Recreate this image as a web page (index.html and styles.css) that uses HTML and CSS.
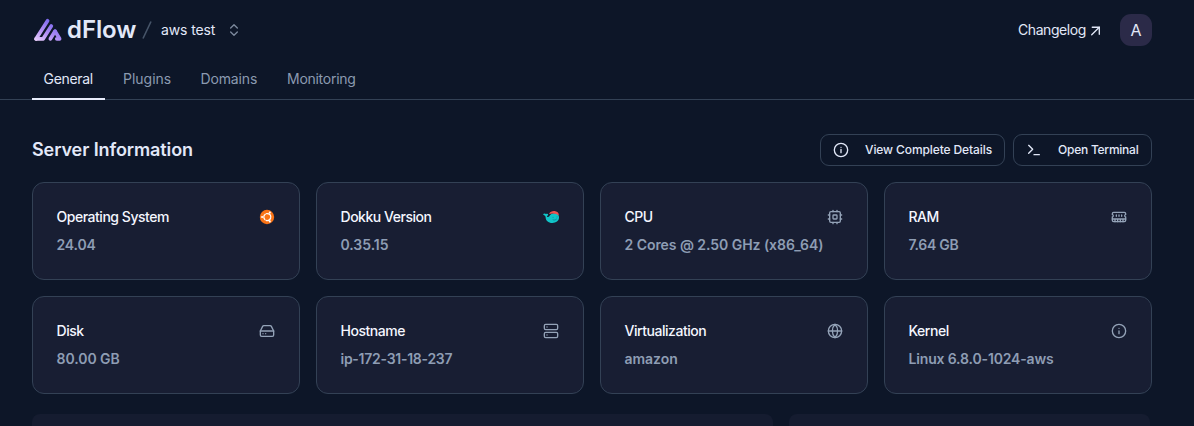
FILE: index.html
```html
<!DOCTYPE html>
<html lang="en">
<head>
<meta charset="utf-8">
<title>dFlow</title>
<link rel="stylesheet" href="styles.css">
</head>
<body>
<header class="topbar">
  <div class="brand">
    <svg class="logo" viewBox="0 0 30 24">
      <defs><linearGradient id="lg" gradientUnits="userSpaceOnUse" x1="20" y1="1" x2="6" y2="24"><stop offset="0" stop-color="#7161ee"/><stop offset=".55" stop-color="#b08df5"/><stop offset="1" stop-color="#e6cbfb"/></linearGradient></defs>
      <g fill="none" stroke="url(#lg)" stroke-width="3.7" stroke-linecap="round" stroke-linejoin="round"><path d="M14.6 2.8 3 21"/><path d="M18.3 8 10.2 20.8H3.2"/><path d="M22 13.2 17.4 20.8"/><path d="M22.2 13.4 26.6 20.8H23.8"/></g>
    </svg>
    <span class="brand-name">dFlow</span>
    <svg class="slash" viewBox="0 0 10 18"><path d="M9 .5 1 17.5"/></svg>
    <span class="server-name">aws test</span>
    <svg class="icon chevrons" viewBox="0 0 24 24"><path d="m7 15 5 5 5-5"/><path d="m7 9 5-5 5 5"/></svg>
  </div>
  <div class="account">
    <a class="changelog">Changelog</a>
    <svg class="icon arrow" viewBox="0 0 24 24"><path d="M6 6h13v13"/><path d="M5 20 19 6"/></svg>
    <span class="avatar">A</span>
  </div>
</header>
<nav class="tabs">
  <a class="tab tab-active">General</a>
  <a class="tab tab-plugins">Plugins</a>
  <a class="tab tab-domains">Domains</a>
  <a class="tab tab-last">Monitoring</a>
</nav>
<main class="content">
  <div class="heading">
    <h1 class="title">Server Information</h1>
    <div class="actions">
      <button class="btn btn-details"><svg class="icon" viewBox="0 0 24 24"><circle cx="12" cy="12" r="10"/><path d="M12 16v-5M12 8h.01"/></svg><span>View Complete Details</span></button>
      <button class="btn btn-terminal"><svg class="icon" viewBox="0 0 24 24"><path d="m4 17 6-6-6-6"/><path d="M12 19h8"/></svg><span>Open Terminal</span></button>
    </div>
  </div>
  <section class="cards">
    <article class="card"><div class="row"><h2 class="label">Operating System</h2>
      <svg class="icon" viewBox="0 0 16 16"><circle cx="8" cy="8" r="7.2" fill="#f97316" stroke="none"/><circle cx="8.3" cy="8" r="3.5" stroke="#fff" stroke-width="1.25" stroke-dasharray="5.9 1.43" stroke-dashoffset="-.7"/><g fill="#fff" stroke="none"><circle cx="3.1" cy="8" r="1.05"/><circle cx="10.8" cy="3.6" r="1.05"/><circle cx="10.8" cy="12.4" r="1.05"/></g></svg></div>
      <p class="value">24.04</p></article>
    <article class="card"><div class="row"><h2 class="label">Dokku Version</h2>
      <svg class="icon" viewBox="0 0 16 16"><path fill="#11c5c8" stroke="none" d="M0 5.3C.9 4.2 2.3 4.4 3 5.1 3.8 4.4 5 4.6 5.2 5.2 5.2 6.2 4.2 6.7 3.9 7.4 4.7 8.4 5.7 8.1 6.3 7.2 8 3.3 15.5 3 16 7.7c.3 4-2.5 6.2-6.6 6.2C5.2 13.9 2.6 11.5 2.6 7.9 2.3 6.7 1 6.6 0 5.3z"/><path fill="#ef5350" stroke="none" d="M6.1 4.9C7.2 2.3 10 1.7 12.4 2.2c2.2.4 3.5 1.8 3.4 4.2C13.5 4.4 9.4 3.9 6.1 4.9z"/><path stroke="#087f91" stroke-width=".7" d="M10 10.8c1.3.7 2.7.2 3.6-.8M10 8.4h.1M14 7.9h.1"/></svg></div>
      <p class="value value-plain">0.35.15</p></article>
    <article class="card"><div class="row"><h2 class="label">CPU</h2>
      <svg class="icon" viewBox="0 0 24 24"><rect x="4" y="4" width="16" height="16" rx="2"/><rect x="9" y="9" width="6" height="6" rx="1"/><path d="M15 2v2M15 20v2M2 15h2M2 9h2M20 15h2M20 9h2M9 2v2M9 20v2"/></svg></div>
      <p class="value value-plain">2 Cores @ 2.50 GHz (x86_64)</p></article>
    <article class="card"><div class="row"><h2 class="label">RAM</h2>
      <svg class="icon" viewBox="0 0 24 24"><path d="M6 19v-3M10 19v-3M14 19v-3M18 19v-3M8 11V9M16 11V9M12 11V9M2 15h20"/><path d="M2 7a2 2 0 0 1 2-2h16a2 2 0 0 1 2 2v1.1a2 2 0 0 0 0 3.837V17a2 2 0 0 1-2 2H4a2 2 0 0 1-2-2v-5.1a2 2 0 0 0 0-3.837Z"/></svg></div>
      <p class="value value-tight">7.64 GB</p></article>
    <article class="card"><div class="row"><h2 class="label">Disk</h2>
      <svg class="icon" viewBox="0 0 24 24"><path d="M22 12H2"/><path d="M5.45 5.11 2 12v6a2 2 0 0 0 2 2h16a2 2 0 0 0 2-2v-6l-3.45-6.89A2 2 0 0 0 16.76 4H7.24a2 2 0 0 0-1.79 1.11zM6 16h.01M10 16h.01"/></svg></div>
      <p class="value value-plain">80.00 GB</p></article>
    <article class="card"><div class="row"><h2 class="label">Hostname</h2>
      <svg class="icon" viewBox="0 0 24 24"><rect x="2" y="2" width="20" height="8" rx="2"/><rect x="2" y="14" width="20" height="8" rx="2"/><path d="M6 6h.01M6 18h.01"/></svg></div>
      <p class="value value-tight">ip-172-31-18-237</p></article>
    <article class="card"><div class="row"><h2 class="label">Virtualization</h2>
      <svg class="icon" viewBox="0 0 24 24"><circle cx="12" cy="12" r="10"/><path d="M12 2a14.5 14.5 0 0 0 0 20 14.5 14.5 0 0 0 0-20M2 12h20"/></svg></div>
      <p class="value value-plain">amazon</p></article>
    <article class="card"><div class="row"><h2 class="label">Kernel</h2>
      <svg class="icon" viewBox="0 0 24 24"><circle cx="12" cy="12" r="10"/><path d="M12 16v-4M12 8h.01"/></svg></div>
      <p class="value">Linux 6.8.0-1024-aws</p></article>
  </section>
  <section class="panels"><div class="panel"></div><div class="panel"></div></section>
</main>
</body>
</html>
```
FILE: styles.css
```css
* { box-sizing: border-box; }
body { margin: 0; height: 426px; overflow: hidden; background: #0d1628; color: #e2e8f8; font-family: Inter, "Liberation Sans", sans-serif; font-size: 14px; }
h1, h2, p { margin: 0; }
.icon { width: 16px; height: 16px; flex: none; fill: none; stroke: currentColor; stroke-width: 2; stroke-linecap: round; stroke-linejoin: round; }
.topbar { height: 60px; padding: 0 42px 0 33px; display: flex; align-items: center; justify-content: space-between; white-space: nowrap; }
.brand, .account { display: flex; align-items: center; }
.logo { width: 30px; height: 24px; }
.brand-name { width: 71px; margin-left: 4px; font-size: 24px; font-weight: 600; line-height: 28px; letter-spacing: -.1px; }
.slash { width: 10px; height: 18px; margin: 0 9px 0 4px; fill: none; stroke: #475569; stroke-width: 1.6; }
.server-name { width: 55px; line-height: 20px; letter-spacing: -.12px; }
.chevrons { margin-left: 10px; color: #7c899d; }
.changelog { width: 70px; line-height: 20px; letter-spacing: -.42px; }
.arrow { width: 13px; height: 13px; margin-left: 1px; stroke-width: 2.4; }
.avatar { width: 32px; height: 32px; margin-left: 18px; border-radius: 11px; background: #2b2a48; display: grid; place-items: center; font-size: 16px; }
.tabs { height: 40px; padding-left: 32px; display: flex; border-bottom: 1px solid #334155; white-space: nowrap; }
.tab { height: 40px; padding: 9px 0 0 12px; line-height: 20px; color: #8b9ab0; }
.tab-active { width: 73px; margin-right: 6px; padding-left: 11.5px; letter-spacing: -.3px; color: #e2e8f8; border-bottom: 2px solid #e8ecfb; }
.tab-plugins { width: 77.5px; }
.tab-domains { width: 86.5px; letter-spacing: -.15px; }
.tab-last { width: 100px; letter-spacing: -.27px; }
.content { padding: 34px 42px 0 32px; }
.heading { height: 32px; display: flex; align-items: center; justify-content: space-between; }
.title { font-size: 18px; font-weight: 600; line-height: 28px; letter-spacing: -.1px; white-space: nowrap; }
.actions { display: flex; gap: 8px; }
.btn { height: 32px; padding: 0 12px; display: flex; align-items: center; gap: 16px; background: transparent; border: 1px solid #334155; border-radius: 9px; color: #e2e8f8; font: 500 12px/16px Inter, "Liberation Sans", sans-serif; white-space: nowrap; }
.btn-details { width: 185px; letter-spacing: -.1px; }
.btn-terminal { width: 139px; letter-spacing: -.24px; }
.cards { margin-top: 16px; display: grid; grid-template-columns: repeat(4, 1fr); gap: 16px; }
.card { height: 98px; padding: 24px 24px 24px 23.5px; border: 1px solid #334155; border-radius: 12px; background: #181e33; white-space: nowrap; }
.row { height: 20px; display: flex; align-items: center; justify-content: space-between; color: #94a3b8; }
.label { font-size: 14px; line-height: 20px; font-weight: 500; letter-spacing: -.47px; color: #f4f6ff; }
.value { margin-top: 8px; font-size: 14px; line-height: 20px; font-weight: 600; letter-spacing: -.16px; color: #8e9db4; }
.value-plain { letter-spacing: -.05px; }
.value-tight { letter-spacing: -.27px; }
.panels { margin-top: 20px; display: grid; grid-template-columns: 741px 361px; gap: 16px; }
.panel { height: 12px; border-radius: 8px 8px 0 0; background: #151c30; }
```
